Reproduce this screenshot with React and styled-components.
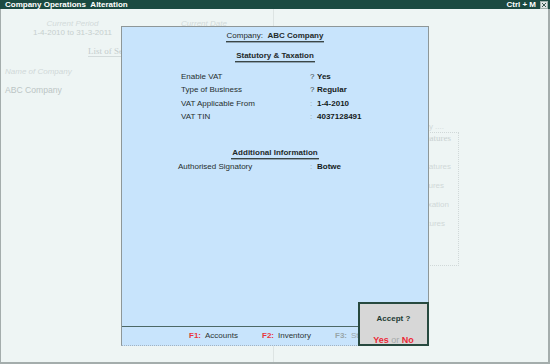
import styled, { createGlobalStyle } from "styled-components";

const GlobalStyle = createGlobalStyle`
  html, body {
    margin: 0;
    padding: 0;
    background: #eef5f4;
  }
  body {
    font-family: "Liberation Sans", Arial, sans-serif;
  }
`;

const vatFields = [
  { label: "Enable VAT", sep: "?", value: "Yes" },
  { label: "Type of Business", sep: "?", value: "Regular" },
  { label: "VAT Applicable From", sep: ":", value: "1-4-2010" },
  { label: "VAT TIN", sep: ":", value: "4037128491" },
];

const extraFields = [{ label: "Authorised Signatory", sep: ":", value: "Botwe" }];

const footerKeys = [
  { key: "F1:", label: "Accounts" },
  { key: "F2:", label: "Inventory" },
  { key: "F3:", label: "Statutory", disabled: true },
];

// faded screen behind the popup, only the tails show
const features = [
  { text: "Accounting Features", pad: 7 },
  { text: "Inventory Features", pad: 14 },
  { text: "Statutory & Taxation", pad: 9 },
  { text: "Tally.NET Features", pad: 13 },
];

export default function App() {
  return (
    <>
      <GlobalStyle />
      <Window>
        <TitleBar>
          <Title>Company Operations&nbsp;&nbsp;Alteration</Title>
          <Shortcut>Ctrl + M</Shortcut>
          <CloseIcon width="8" height="8" viewBox="0 0 8 8">
            <rect x="0.5" y="0.5" width="7" height="7" fill="#dfe6e4" stroke="#9fb0ab" />
            <path d="M2 2 L6 6 M6 2 L2 6" stroke="#3a5a52" strokeWidth="1" />
          </CloseIcon>
        </TitleBar>

        <Body>
          <LeftPane>
            <PeriodRow>
              <PeriodCol $w={143}>
                <GhostCaption>Current Period</GhostCaption>
                <GhostText>1-4-2010 to 31-3-2011</GhostText>
              </PeriodCol>
              <PeriodCol $w={120}>
                <GhostCaption>Current Date</GhostCaption>
              </PeriodCol>
            </PeriodRow>
            <ListHeading>List of Selected Companies</ListHeading>
            <NameCaption>Name of Company</NameCaption>
            <CompanyName>ABC Company</CompanyName>
          </LeftPane>

          <RightPane>
            <FeatureArea>
              <FeatureCaption>Security ....</FeatureCaption>
              <FeatureBox>
                <FeatureTitle>Company Features</FeatureTitle>
                {features.map((f) => (
                  <FeatureItem key={f.text} $pad={f.pad}>
                    {f.text}
                  </FeatureItem>
                ))}
              </FeatureBox>
            </FeatureArea>
          </RightPane>

          <Modal>
            <ModalBody>
              <Heading>
                Company:&nbsp;&nbsp;<strong>ABC Company</strong>
              </Heading>
              <Heading $bold $mt={9}>
                Statutory &amp; Taxation
              </Heading>
              <FieldGrid $indent={59} $mt={8}>
                {vatFields.map((f) => (
                  <FieldRow key={f.label} field={f} />
                ))}
              </FieldGrid>
              <Heading $bold $mt={24}>
                Additional Information
              </Heading>
              <FieldGrid $indent={56} $mt={1}>
                {extraFields.map((f) => (
                  <FieldRow key={f.label} field={f} />
                ))}
              </FieldGrid>
            </ModalBody>
            <Footer>
              {footerKeys.map((k) => (
                <FooterItem key={k.key} $disabled={k.disabled}>
                  <FooterKey>{k.key}</FooterKey>
                  {k.label}
                </FooterItem>
              ))}
            </Footer>
          </Modal>

          <AcceptBox>
            <AcceptTitle>Accept ?</AcceptTitle>
            <AcceptChoice>
              <Choice>Yes</Choice> <Or>or</Or> <Choice>No</Choice>
            </AcceptChoice>
          </AcceptBox>
        </Body>
      </Window>
    </>
  );
}

function FieldRow({ field }) {
  return (
    <>
      <Label>{field.label}</Label>
      <Sep $q={field.sep === "?"}>{field.sep}</Sep>
      <Value>{field.value}</Value>
    </>
  );
}

const Window = styled.div`
  width: 550px;
  height: 364px;
  display: flex;
  flex-direction: column;
  background: #eef5f4;
`;

const TitleBar = styled.div`
  height: 9px;
  flex: none;
  display: flex;
  align-items: center;
  padding: 0 2px 0 5px;
  background: #1b4a41;
  color: #ffffff;
  font-size: 8px;
  font-weight: bold;
  line-height: 9px;
`;

const Title = styled.span`
  flex: 1;
  white-space: nowrap;
`;

const Shortcut = styled.span`
  margin-right: 4px;
  white-space: nowrap;
`;

const CloseIcon = styled.svg`
  display: block;
`;

const Body = styled.div`
  flex: 1;
  position: relative;
  display: grid;
  grid-template-columns: 273px 1fr;
  border-left: 1px solid #a4adac;
  border-right: 2px solid #a4adac;
  border-bottom: 2px solid #a4adac;
  overflow: hidden;
`;

const LeftPane = styled.div`
  display: flex;
  flex-direction: column;
  align-items: flex-start;
  padding-top: 10px;
  border-right: 1px solid #dde4e3;
`;

const RightPane = styled.div`
  padding-top: 113px;
`;

const PeriodRow = styled.div`
  display: flex;
`;

const PeriodCol = styled.div`
  width: ${(p) => p.$w}px;
  text-align: center;
  font-size: 8px;
  line-height: 9px;
`;

const GhostCaption = styled.div`
  font-style: italic;
  color: #d2dada;
`;

const GhostText = styled.div`
  color: #c6cfce;
`;

const ListHeading = styled.div`
  margin: 9px 0 0 87px;
  font-family: "Liberation Serif", "Times New Roman", serif;
  font-size: 9px;
  line-height: 10px;
  color: #c4cccc;
  border-bottom: 1px solid #d3dbdb;
  white-space: nowrap;
`;

const NameCaption = styled.div`
  margin: 10px 0 0 4px;
  font-size: 8px;
  font-style: italic;
  line-height: 10px;
  color: #d0d8d8;
`;

const CompanyName = styled.div`
  margin: 8px 0 0 4px;
  font-size: 8.6px;
  line-height: 10px;
  color: #bcc5c5;
`;

const FeatureArea = styled.div`
  margin-left: 100px;
  width: 85px;
`;

const FeatureCaption = styled.div`
  text-align: right;
  padding-right: 15px;
  font-size: 8px;
  line-height: 10px;
  color: #d2dada;
`;

const FeatureBox = styled.div`
  box-sizing: border-box;
  height: 134px;
  border: 1px dotted #d0d8d8;
`;

const FeatureTitle = styled.div`
  text-align: right;
  padding-right: 7px;
  font-family: "Liberation Serif", "Times New Roman", serif;
  font-size: 9px;
  line-height: 10px;
  color: #c8d0d0;
  white-space: nowrap;
`;

const FeatureItem = styled.div`
  text-align: right;
  padding-right: ${(p) => p.$pad}px;
  margin-top: 9px;
  font-size: 8px;
  line-height: 10px;
  color: #d0d8d8;
  white-space: nowrap;
  &:nth-of-type(2) {
    margin-top: 19px;
  }
`;

const Modal = styled.div`
  position: absolute;
  left: 120px;
  top: 17px;
  width: 308px;
  height: 320px;
  box-sizing: border-box;
  display: flex;
  flex-direction: column;
  background: #c8e4fc;
  border: 1px solid #8e9798;
  border-bottom: 1px dotted #a3b3c2;
  color: #222;
  font-size: 8px;
`;

const ModalBody = styled.div`
  flex: 1;
  display: flex;
  flex-direction: column;
  align-items: center;
  padding-top: 4px;
`;

const Heading = styled.div`
  margin-top: ${(p) => p.$mt || 0}px;
  line-height: 10px;
  font-weight: ${(p) => (p.$bold ? "bold" : "normal")};
  color: #1f2a2a;
  border-bottom: 1px solid #3a4646;
  box-shadow: 0 1px 0 #8ea3b2;
  padding: 0 1px;
  white-space: nowrap;
`;

const FieldGrid = styled.div`
  align-self: stretch;
  margin-top: ${(p) => p.$mt}px;
  padding-left: ${(p) => p.$indent}px;
  display: grid;
  grid-template-columns: ${(p) => 188 - p.$indent}px 7px 1fr;
  grid-auto-rows: 13.5px;
  align-items: center;
  line-height: 10px;
`;

const Label = styled.span`
  color: #262e2e;
  white-space: nowrap;
`;

const Sep = styled.span`
  color: ${(p) => (p.$q ? "#3c4444" : "#98a4a8")};
`;

const Value = styled.span`
  font-weight: bold;
  color: #141a1a;
`;

const Footer = styled.div`
  height: 19px;
  box-sizing: border-box;
  flex: none;
  display: flex;
  padding-left: 67px;
  border-top: 1px solid #4c6866;
  line-height: 18px;
  overflow: hidden;
  white-space: nowrap;
`;

const FooterItem = styled.span`
  width: 73px;
  flex: none;
  color: ${(p) => (p.$disabled ? "#98a6a8" : "#2c3434")};
  & > span {
    color: ${(p) => (p.$disabled ? "#98a6a8" : "#e8363c")};
  }
`;

const FooterKey = styled.span`
  display: inline-block;
  width: 16px;
  font-weight: bold;
`;

const AcceptBox = styled.div`
  position: absolute;
  left: 357px;
  top: 293px;
  width: 71px;
  height: 44px;
  box-sizing: border-box;
  display: flex;
  flex-direction: column;
  align-items: center;
  padding-top: 10px;
  background: #d7d7d7;
  border: 2px solid #27493f;
  font-size: 8px;
  line-height: 10px;
`;

const AcceptTitle = styled.div`
  font-weight: bold;
  color: #1d3a33;
`;

const AcceptChoice = styled.div`
  margin-top: 11px;
  font-size: 9px;
  white-space: nowrap;
`;

const Choice = styled.span`
  font-weight: bold;
  color: #ec2a36;
`;

const Or = styled.span`
  color: #a6aaaa;
`;
